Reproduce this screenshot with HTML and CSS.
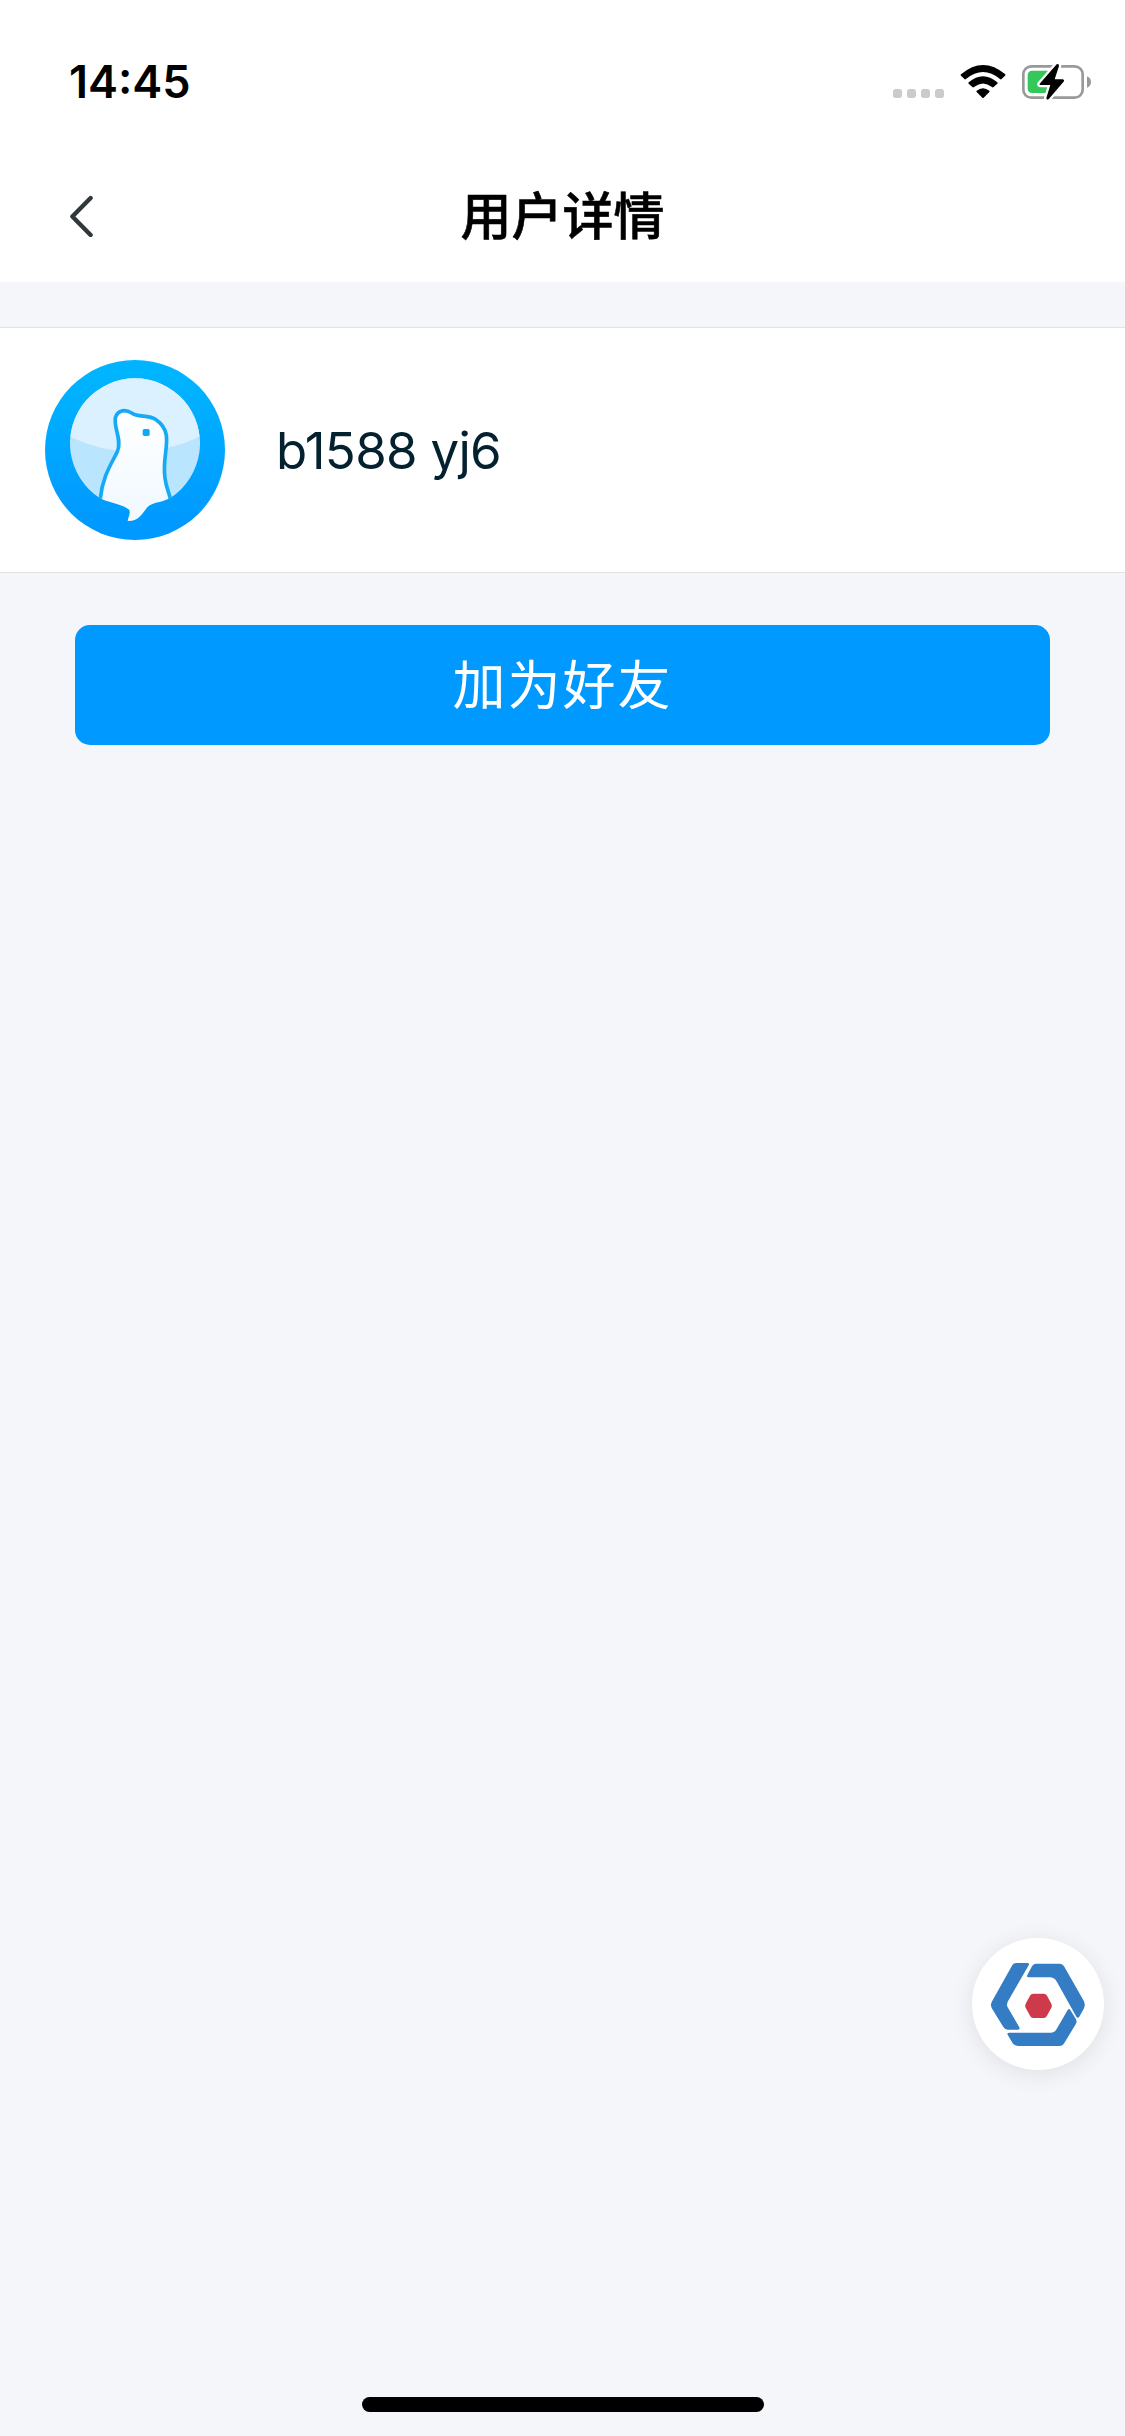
FILE: index.html
```html
<!DOCTYPE html>
<html lang="zh-CN">
<head>
    <meta charset="UTF-8">
    <title>用户详情</title>
    <link rel="stylesheet" href="styles.css">
</head>

<body>
    <!-- 状态栏 -->
    <div class="status-bar">
        <span class="status-time">14:45</span>
        <div class="status-icons">
            <svg class="icon-signal" viewBox="0 0 153 27">
                <g fill="#cbcbcb">
                    <rect x="0" y="0" width="27" height="27" rx="8"/>
                    <rect x="42" y="0" width="27" height="27" rx="8"/>
                    <rect x="84" y="0" width="27" height="27" rx="8"/>
                    <rect x="126" y="0" width="27" height="27" rx="8"/>
                </g>
            </svg>
            <svg class="icon-wifi" viewBox="240 42 138 105">
                <path d="M243 73 Q309 17 376 73 Q377 75 375 77 L364 88 Q362 89 360 87 Q309 45 258 87 Q256 89 254 88 L243 77 Q241 75 243 73Z"/>
                <path d="M266 97 Q309 61 352 97 Q354 99 352 101 L340 112 Q338 113 336 111 Q309 90 282 111 Q280 113 278 112 L266 101 Q264 99 266 97Z"/>
                <path d="M290 122 Q309 107 328 122 Q330 124 328 126 L311 143 Q309 145 307 143 L290 126 Q288 124 290 122Z"/>
            </svg>
            <svg class="icon-battery" viewBox="426 39 210 114">
                <rect x="430" y="49" width="178" height="94" rx="24" fill="none" stroke="#999" stroke-width="8"/>
                <path d="M621 79 Q633 84 633 96 Q633 108 621 113Z" fill="#999"/>
                <rect x="443" y="62" width="76" height="67" rx="13" fill="#34c759"/>
                <path d="M530 43 L479 101 Q477 105 482 105 L511 105 L499 144 Q500 152 507 146 L552 94 Q554 89 548 88 L524 88 L537 48 Q537 40 530 43Z" fill="#000" stroke="#fff" stroke-width="14" paint-order="stroke" stroke-linejoin="round"/>
            </svg>
        </div>
    </div>

    <!-- 导航栏 -->
    <div class="nav-bar">
        <svg class="nav-back" viewBox="0 0 24 42">
            <path d="M20.6 3 L2.4 21.5 L20.6 40" fill="none" stroke="#2f383b" stroke-width="4.4" stroke-linecap="round" stroke-linejoin="round"/>
        </svg>
        <h1 class="nav-title">用户详情</h1>
    </div>

    <!-- 用户信息 -->
    <div class="user-card">
        <svg class="avatar" viewBox="45 60 540 540">
            <defs>
                <linearGradient id="bg" x1="0" y1="0" x2="0" y2="1">
                    <stop offset="0.1" stop-color="#00b4ff"/>
                    <stop offset="0.9" stop-color="#0099ff"/>
                </linearGradient>
                <linearGradient id="body" x1="0" y1="0" x2="0" y2="1">
                    <stop offset="0" stop-color="#ffffff"/>
                    <stop offset="1" stop-color="#f0f9ff"/>
                </linearGradient>
                <clipPath id="disc">
                    <path d="M208 473 A195 195 0 1 1 422 473 L315 473Z"/>
                </clipPath>
            </defs>
            <circle cx="315" cy="330" r="270" fill="url(#bg)"/>
            <g clip-path="url(#disc)">
                <rect x="110" y="110" width="410" height="400" fill="#bae5ff"/>
                <path d="M110 100 H520 V285 Q420 335 310 335 Q210 335 110 285Z" fill="#dbf1ff"/>
            </g>
            <path d="M213 476 C217 410 245 370 262 335 C277 300 251 265 256 234 C263 207 289 209 305 219 C325 234 355 222 378 239 C438 280 393 340 405 415 C408 440 416 455 420 474 C400 486 377 486 359 496 C341 507 335 544 293 543 C295 531 302 520 298 511 C286 494 246 491 213 476Z" fill="url(#body)"/>
            <path d="M211 476 C217 410 245 370 262 335 C277 300 251 265 256 234 C263 207 289 209 305 219 C325 234 355 222 378 239 C438 280 393 340 405 415 C408 440 416 455 421 476" fill="none" stroke="#14aaf5" stroke-width="11"/>
            <rect x="338" y="267" width="21" height="21" rx="5" fill="#10a9f5"/>
        </svg>
        <span class="user-name">b1588 yj6</span>
    </div>

    <button class="add-button">加为好友</button>

    <!-- 悬浮按钮 -->
    <div class="float-button">
        <svg class="float-logo" viewBox="120 156 288 255">
            <g fill="#347cc4">
                <path d="M199 159 H233 Q239 160 236 166 L173 275 Q169 283 173 292 L208 352 Q211 359 203 359 H173 Q165 359 160 351 L125 294 Q120 285 125 276 L185 169 Q190 159 199 159Z"/>
                <path d="M257 161 H328 Q338 161 343 170 L402 274 Q407 285 402 295 L388 320 Q383 326 379 320 L321 216 Q314 203 301 202 H235 Q229 201 232 195 L246 169 Q250 161 257 161Z"/>
                <path d="M353 300 Q357 294 361 300 L378 328 Q382 335 377 343 L343 399 Q338 408 328 408 H204 Q193 408 188 400 L173 374 Q170 368 178 368 H301 Q315 368 320 357Z"/>
            </g>
            <path d="M250 251 H281 Q288 251 291 257 L304 281 Q307 287 304 293 L291 317 Q288 324 281 324 H250 Q243 324 240 317 L227 293 Q224 287 227 281 L240 257 Q243 251 250 251Z" fill="#ce394b"/>
        </svg>
    </div>

    <div class="home-indicator"></div>
</body>
</html>
```

FILE: styles.css
```css
* {
    box-sizing: border-box;
}
body {
    margin: 0;
    height: 2436px;
    display: flex;
    flex-direction: column;
    font-family: Inter, "Noto Sans CJK SC", sans-serif;
    background-color: #F4F6FA;
}
/* 状态栏 */
.status-bar {
    height: 150px;
    padding: 55px 33px 0 69px;
    display: flex;
    justify-content: space-between;
    align-items: flex-start;
    background-color: #FFFFFF;
}
.status-time {
    font-size: 45px;
    line-height: 54px;
    font-weight: 600;
    color: #000;
}
.status-icons {
    display: flex;
    align-items: flex-start;
    padding-top: 8px;
}
.icon-signal {
    width: 51px;
    height: 9px;
    margin: 26px 16px 0 0;
}
.icon-wifi {
    width: 46px;
    height: 35px;
    margin: 1px 16px 0 0;
}
.icon-battery {
    width: 70px;
    height: 38px;
}
/* 导航栏 */
.nav-bar {
    height: 132px;
    padding: 0 70px;
    display: grid;
    grid-template-columns: 24px 1fr 24px;
    align-items: center;
    background-color: #FFFFFF;
}
.nav-back {
    width: 24px;
    height: 42px;
}
.nav-title {
    margin: 0;
    padding-bottom: 6px;
    font-family: "Noto Sans CJK SC", sans-serif;
    font-size: 51px;
    line-height: 74px;
    font-weight: 500;
    text-align: center;
    color: #000;
    -webkit-text-stroke: 0.6px #000;
}
/* 用户信息 */
.user-card {
    height: 246px;
    margin-top: 45px;
    padding: 32px 0 0 45px;
    display: flex;
    align-items: flex-start;
    gap: 51px;
    background-color: #FFFFFF;
    border-top: 1px solid #E0E2E4;
    border-bottom: 1px solid #E0E2E4;
}
.avatar {
    width: 180px;
    height: 180px;
}
.user-name {
    font-size: 51px;
    line-height: 181px;
    letter-spacing: -0.7px;
    color: #03212E;
}
.add-button {
    height: 120px;
    margin: 52px 75px 0;
    padding: 0 0 6px;
    border: none;
    border-radius: 15px;
    background-color: #0099FF;
    color: #FFFFFF;
    font-family: "Noto Sans CJK SC", sans-serif;
    font-size: 53px;
    font-weight: 400;
    letter-spacing: 2px;
    cursor: pointer;
}
/* 悬浮按钮 */
.float-button {
    position: fixed;
    left: 972px;
    top: 1938px;
    width: 132px;
    height: 132px;
    display: flex;
    align-items: center;
    justify-content: center;
    border-radius: 50%;
    background-color: #FFFFFF;
    box-shadow: 0 4px 24px rgba(0,0,0,0.09);
}
.float-logo {
    width: 96px;
    height: 85px;
}
/* 底部横条 */
.home-indicator {
    width: 402px;
    height: 15px;
    margin: auto auto 24px;
    border-radius: 8px;
    background-color: #000;
}
```
